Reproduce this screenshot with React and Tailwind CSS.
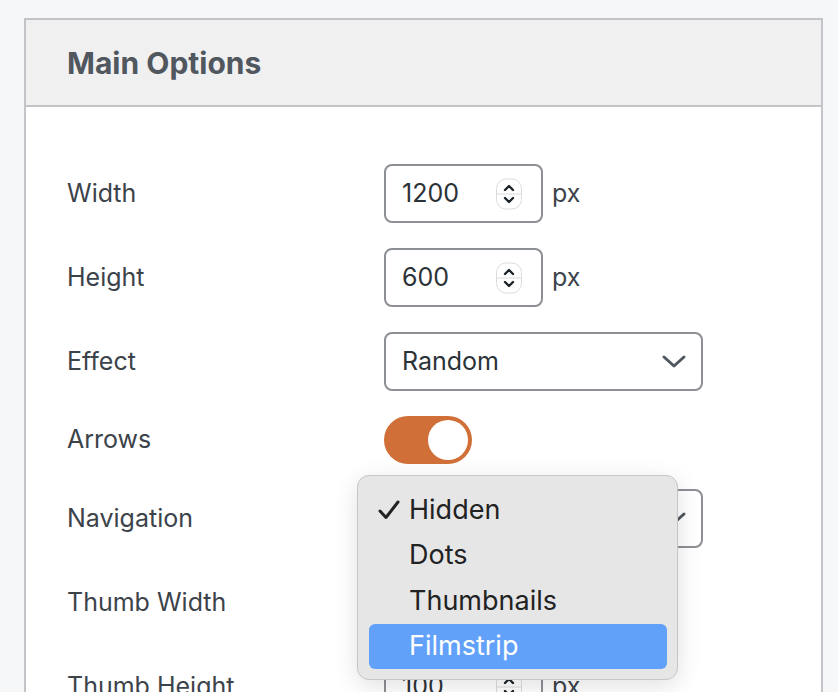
import React from "react";

const font = { fontFamily: 'Inter, "Noto Sans", "Liberation Sans", sans-serif' };

function Spinner() {
  return (
    <div className="absolute right-[19px] top-1/2 -translate-y-1/2 flex h-[31px] w-[26px] flex-col items-center justify-center rounded-[10px] border border-[#dcdcde] bg-white">
      <svg width="14" height="9" viewBox="0 0 14 9" className="mb-[1px]">
        <path d="M3 6.5 L7 2.5 L11 6.5" fill="none" stroke="#1d2327" strokeWidth="2.4" strokeLinecap="round" strokeLinejoin="round" />
      </svg>
      <div className="h-px w-full bg-[#dcdcde]" />
      <svg width="14" height="9" viewBox="0 0 14 9" className="mt-[1px]">
        <path d="M3 2.5 L7 6.5 L11 2.5" fill="none" stroke="#1d2327" strokeWidth="2.4" strokeLinecap="round" strokeLinejoin="round" />
      </svg>
    </div>
  );
}

function NumberInput({ value }) {
  return (
    <div className="flex items-center gap-[9px]">
      <div className="relative flex h-[59px] w-[159px] items-center rounded-[8px] border-2 border-[#8c8f94] bg-white pl-[16px] text-[25px] text-[#2c3338]">
        {value}
        <Spinner />
      </div>
      <span className="text-[25px] text-[#3c434a]">px</span>
    </div>
  );
}

function Select({ value }) {
  return (
    <div className="relative flex h-[59px] w-[319px] items-center rounded-[8px] border-2 border-[#8c8f94] bg-white pl-[16px] text-[25px] text-[#2c3338]">
      {value}
      <svg width="26" height="16" viewBox="0 0 26 16" className="absolute right-[14px] top-1/2 -translate-y-1/2">
        <path d="M3 3 L13 12 L23 3" fill="none" stroke="#50575e" strokeWidth="3" strokeLinecap="round" strokeLinejoin="round" />
      </svg>
    </div>
  );
}

function Row({ label, children, h = "h-[59px]" }) {
  return (
    <div className={`flex items-center ${h}`}>
      <div className="w-[317px] shrink-0 text-[25px] text-[#3c434a]">{label}</div>
      {children}
    </div>
  );
}

export default function App() {
  return (
    <div className="relative h-[692px] w-[838px] overflow-hidden bg-[#f6f7f9]" style={font}>
      <div className="ml-[24px] mt-[18px] w-[799px] border-2 border-[#c3c4c7] bg-white">
        <div className="flex h-[87px] items-center border-b-2 border-[#c3c4c7] bg-[#f0f0f0] pl-[41px]">
          <h2 className="pt-[2px] text-[30px] font-bold text-[#50575e]">Main Options</h2>
        </div>
        <div className="flex flex-col gap-[25px] pl-[41px] pt-[57px] pb-[40px]">
          <Row label="Width"><NumberInput value="1200" /></Row>
          <Row label="Height"><NumberInput value="600" /></Row>
          <Row label="Effect"><Select value="Random" /></Row>
          <Row label="Arrows" h="h-[48px]">
            <div className="flex h-[48px] w-[88px] items-center justify-end rounded-full bg-[#d07038] pr-[4px]">
              <div className="h-[40px] w-[40px] rounded-full bg-white" />
            </div>
          </Row>
          <Row label="Navigation"><Select value="Hidden" /></Row>
          <Row label="Thumb Width"><NumberInput value="150" /></Row>
          <Row label="Thumb Height"><NumberInput value="100" /></Row>
        </div>
      </div>

      <div className="absolute left-[357px] top-[475px] flex h-[205px] w-[321px] flex-col rounded-[12px] border border-[#c6c6c6] bg-[#e6e6e6] pb-[10px] pl-[11px] pr-[10px] pt-[11px] text-[27px] text-[#222222] shadow-[0_6px_24px_rgba(0,0,0,0.12)]">
        <div className="relative flex h-[46px] items-center pl-[40px]">
          <svg width="22" height="20" viewBox="0 0 22 20" className="absolute left-[9px] top-1/2 -translate-y-1/2">
            <path d="M2 11 L8 17.5 L20 2" fill="none" stroke="#222222" strokeWidth="3" strokeLinecap="round" strokeLinejoin="round" />
          </svg>
          Hidden
        </div>
        <div className="flex h-[46px] items-center pl-[40px]">Dots</div>
        <div className="flex h-[46px] items-center pl-[40px]">Thumbnails</div>
        <div className="flex h-[46px] items-center rounded-[6px] bg-[#62a1f9] pl-[40px] text-white">Filmstrip</div>
      </div>
    </div>
  );
}
